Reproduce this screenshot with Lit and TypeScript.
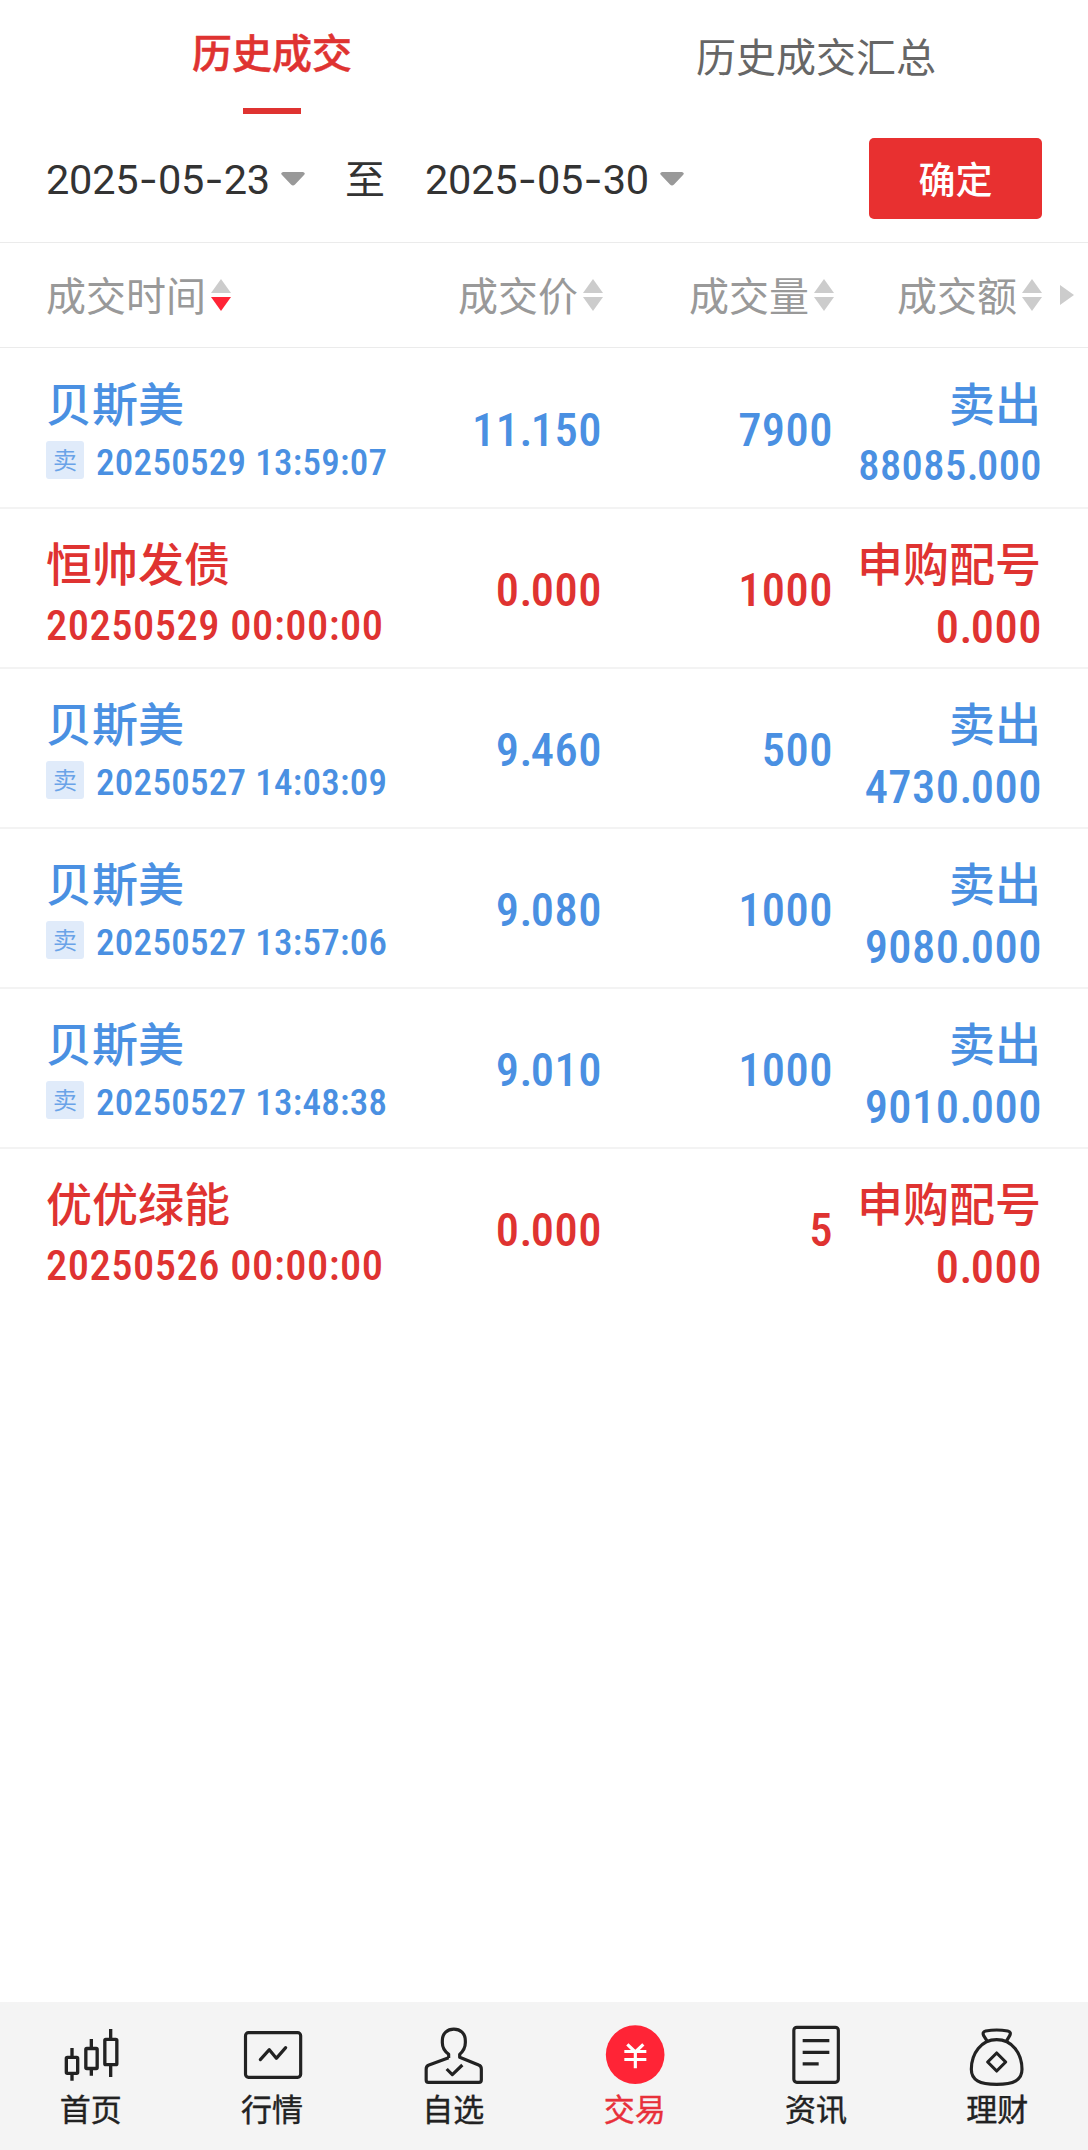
import { LitElement, html, svg, css } from "lit";
import { customElement } from "lit/decorators.js";
import { classMap } from "lit/directives/class-map.js";

interface Trade {
  name: string;
  time: string;
  price: string;
  volume: string;
  action: string;
  amount: string;
  sell: boolean;
}

const trades: Trade[] = [
  { name: "贝斯美", time: "20250529 13:59:07", price: "11.150", volume: "7900", action: "卖出", amount: "88085.000", sell: true },
  { name: "恒帅发债", time: "20250529 00:00:00", price: "0.000", volume: "1000", action: "申购配号", amount: "0.000", sell: false },
  { name: "贝斯美", time: "20250527 14:03:09", price: "9.460", volume: "500", action: "卖出", amount: "4730.000", sell: true },
  { name: "贝斯美", time: "20250527 13:57:06", price: "9.080", volume: "1000", action: "卖出", amount: "9080.000", sell: true },
  { name: "贝斯美", time: "20250527 13:48:38", price: "9.010", volume: "1000", action: "卖出", amount: "9010.000", sell: true },
  { name: "优优绿能", time: "20250526 00:00:00", price: "0.000", volume: "5", action: "申购配号", amount: "0.000", sell: false },
];

const navItems = [
  {
    label: "首页",
    icon: svg`<g transform="translate(-176 -99)" stroke-width="10">
      <rect x="198" y="202" width="34" height="48" rx="3"/><path d="M215 174v28M215 250v22"/>
      <rect x="256.5" y="175.5" width="34" height="60" rx="3"/><path d="M273 147v28M273 236v21"/>
      <rect x="313.5" y="148" width="36" height="76" rx="3"/><path d="M331 117v31M331 224v37"/></g>`,
  },
  {
    label: "行情",
    icon: svg`<g transform="translate(-720 -99)">
      <rect x="736.500" y="128" width="165.500" height="134" rx="9"/><path d="M781 209L808 179L829 205L857 173" stroke-linecap="round"/></g>`,
  },
  {
    label: "自选",
    icon: svg`<g transform="translate(-175 -99)">
      <path d="M258 204V193C245 183 239 175 239 158V152C239 130 254 117.500 273.500 117.500S308 130 308 152V158C308 175 302 183 291 193V202L348 225Q356 228 356 237V270Q356 277 349 277H197Q190.500 277 190.500 270V237Q190.500 228 199 225L258 203"/>
      <path d="M252 237L269 254L299 225"/></g>`,
  },
  {
    label: "交易",
    active: true,
    icon: svg`<g transform="translate(-719 -99)">
      <circle class="coin" cx="815.500" cy="194" r="88"/><path class="yen" d="M792 163L816 186L840 163M783 184.500H849M783 208.500H849M816 184V235"/></g>`,
  },
  {
    label: "资讯",
    icon: svg`<g transform="translate(-177 -99)">
      <rect x="206.500" y="112" width="133.500" height="165" rx="9"/><path d="M233 152H313M233 187H313M233 221.500H281"/></g>`,
  },
  {
    label: "理财",
    icon: svg`<g transform="translate(-721 -99)">
      <path d="M816 149C770 149 740 190 740 238C740 270 764 283 816 283S892 270 892 238C892 190 862 149 816 149Z"/>
      <path d="M788 154L777 137Q772 126 783 123Q816 117 849 123Q861 126 855 137L845 154"/>
      <path d="M816 189L843 216L816 243L789 216Z"/></g>`,
  },
];

@customElement("sort-arrows")
class SortArrows extends LitElement {
  static properties = { down: { type: Boolean } };
  declare down: boolean;
  static styles = css`
    :host { display: block; width: 20px; height: 32px; }
    svg { display: block; }
    .tri { fill: #ccc; }
    .on { fill: #ff2436; }
  `;
  render() {
    return html`<svg width="20" height="32" viewBox="0 0 20 32">
      <path class="tri" d="M10 0L20 14H0Z" /><path class=${this.down ? "on" : "tri"} d="M10 32L20 18H0Z" />
    </svg>`;
  }
}

@customElement("app-root")
class AppRoot extends LitElement {
  static styles = css`
    :host {
      display: flex; flex-direction: column; width: 1088px; height: 2150px; box-sizing: border-box;
      background: #fff; font-family: "Noto Sans CJK SC", sans-serif; color: #333; overflow: hidden;
    }
    .tabs { display: grid; grid-template-columns: 1fr 1fr; height: 114px; text-align: center; font-size: 40px; }
    .tab { display: flex; flex-direction: column; align-items: center; justify-content: space-between; color: #666; line-height: 58px; padding-top: 26px; box-sizing: border-box; }
    .tab.active { color: #df3331; font-weight: 500; padding-top: 22px; -webkit-text-stroke: 0.5px #df3331; }
    .bar { width: 58px; height: 6px; background: #df3331; }
    .filter { display: flex; align-items: center; height: 129px; padding: 1px 46px 0; box-sizing: border-box; border-bottom: 1px solid #ebebeb; font-size: 40px; }
    .date { width: 222px; white-space: nowrap; font: 400 41.5px/60px Roboto, sans-serif; letter-spacing: -0.2px; padding-top: 1px; }
    .dash { display: inline-block; width: 19.5px; text-align: center; font-family: Inter, sans-serif; letter-spacing: 0; }
    .caret { margin-left: 13px; }
    .to { margin: -3px 40px 0; line-height: 58px; }
    .ok { margin-left: auto; width: 173px; height: 81px; border-radius: 5px; background: #e83030; color: #fff; font: 500 37px/77px "Noto Sans CJK SC", sans-serif; text-align: center; border: 0; padding: 0; }
    .cols { display: grid; grid-template-columns: 325px 232px 231px 208px 46px; padding-left: 46px; height: 105px; box-sizing: border-box; border-bottom: 1px solid #ebebeb; color: #999; font-size: 40px; align-items: center; }
    .col { display: flex; align-items: center; justify-content: flex-end; gap: 5px; line-height: 58px; }
    .col span { margin-top: -3px; }
    .col.first { justify-content: flex-start; }
    .more { display: flex; padding-left: 18px; }
    .list { padding-top: 1px; }
    .row { display: grid; grid-template-columns: 325px 230px 231px 209px; padding-left: 46px; height: 160px; box-sizing: border-box; border-bottom: 2px solid #f3f3f3; color: #df3331; font-weight: 500; }
    .row.sell { color: #4a90e2; }
    .row.last { border-color: transparent; }
    .name { font-size: 46px; line-height: 60px; padding-top: 22px; white-space: nowrap; }
    .sub { display: flex; align-items: flex-start; white-space: nowrap; }
    .badge { flex: none; width: 38px; height: 38px; margin: 10px 12px 0 0; border-radius: 3px; background: #e0ebfa; color: #6aa3e8; font: 400 24px/35px "Noto Sans CJK SC", sans-serif; text-align: center; }
    .right { text-align: right; }
    .num, .time { font-family: Roboto, sans-serif; font-stretch: 75%; letter-spacing: 0.01em; }
    .num { font-size: 46.5px; line-height: 73px; margin-right: -1px; white-space: nowrap; }
    .num.long { font-size: 42.5px; line-height: 69px; }
    .num.mid { line-height: 163px; }
    .dot { letter-spacing: -0.035em; }
    .time { font-size: 42.5px; line-height: 69px; letter-spacing: 0.012em; }
    .sell .time { font-size: 37px; line-height: 63px; letter-spacing: 0.008em; }
    .nav { margin-top: auto; display: grid; grid-template-columns: repeat(6, 1fr); height: 148px; background: #f4f4f4; }
    .item { display: flex; flex-direction: column; align-items: center; padding-top: 21px; color: #222; font-size: 31px; line-height: 41px; -webkit-text-stroke: 0.4px currentColor; }
    .item.active { color: #e8303a; }
    .icon { width: 64px; height: 64px; fill: none; stroke: #222; stroke-width: 9.500; stroke-linejoin: round; }
    .coin { fill: #ff2436; stroke: none; }
    .yen { stroke: #fff; }
  `;

  private caret() {
    return html`<svg class="caret" width="24" height="14" viewBox="0 0 24 14"><path fill="#999" d="M2 0H22Q25 1 23 3L14 12.500Q12 14.500 10 12.500L1 3Q-1 1 2 0Z" /></svg>`;
  }

  private date(value: string) {
    const parts = value.split("-");
    return html`<span class="date">${parts.map((p, i) => (i ? html`<span class="dash">-</span>${p}` : p))}</span>${this.caret()}`;
  }

  private decimal(value: string) {
    const [whole, fraction] = value.split(".");
    return html`${whole}<span class="dot">.</span>${fraction}`;
  }

  render() {
    return html`
      <div class="tabs">
        <div class="tab active">历史成交<span class="bar"></span></div>
        <div class="tab">历史成交汇总</div>
      </div>
      <div class="filter">
        ${this.date("2025-05-23")}
        <span class="to">至</span>
        ${this.date("2025-05-30")}
        <button class="ok">确定</button>
      </div>
      <div class="cols">
        <div class="col first"><span>成交时间</span><sort-arrows down></sort-arrows></div>
        ${["成交价", "成交量", "成交额"].map((t) => html`<div class="col"><span>${t}</span><sort-arrows></sort-arrows></div>`)}
        <div class="more"><svg width="14" height="20" viewBox="0 0 14 20"><path fill="#ccc" d="M0 0L14 10L0 20Z" /></svg></div>
      </div>
      <div class="list">
        ${trades.map(
          (t, i) => html`<div class=${classMap({ row: true, sell: t.sell, last: i === trades.length - 1 })}>
            <div>
              <div class="name">${t.name}</div>
              <div class="sub">${t.sell ? html`<span class="badge">卖</span>` : ""}<span class="time">${t.time}</span></div>
            </div>
            <div class="right mid num">${this.decimal(t.price)}</div>
            <div class="right mid num">${t.volume}</div>
            <div class="right">
              <div class="name">${t.action}</div>
              <div class=${classMap({ num: true, long: t.amount.length > 8 })}>${this.decimal(t.amount)}</div>
            </div>
          </div>`
        )}
      </div>
      <div class="nav">
        ${navItems.map(
          (n) => html`<div class=${classMap({ item: true, active: !!n.active })}>
            <svg class="icon" viewBox="0 0 192 192">${n.icon}</svg>${n.label}
          </div>`
        )}
      </div>
    `;
  }
}
